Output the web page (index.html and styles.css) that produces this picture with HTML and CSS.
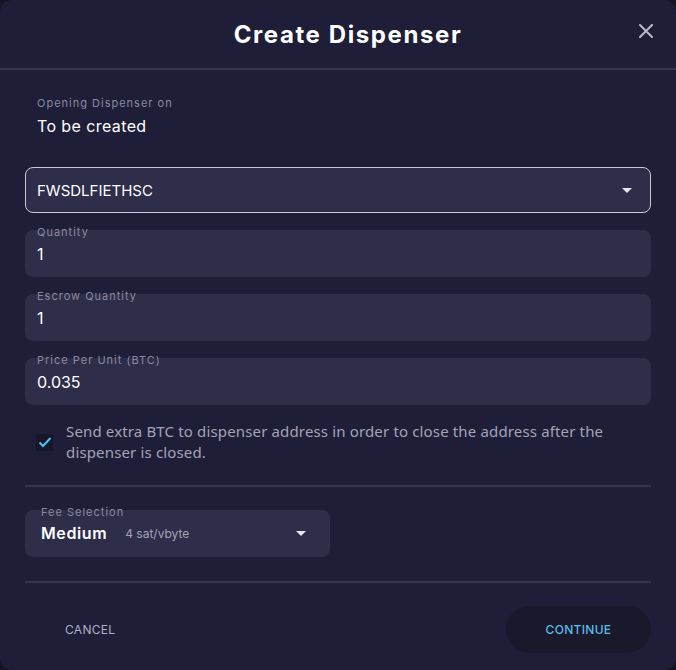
FILE: index.html
```html
<!DOCTYPE html>
<html lang="en">
<head>
    <meta charset="UTF-8">
    <meta name="viewport" content="width=device-width, initial-scale=1.0">
    <title>Create Dispenser</title>
    <link rel="stylesheet" href="styles.css">
</head>
<body>
    <div class="dialog">
        <div class="header">
            <span></span>
            <h2>Create Dispenser</h2>
            <button class="close" aria-label="Close">
                <svg width="14" height="14" viewBox="0 0 14 14"><path d="M1 1L13 13M13 1L1 13" stroke="#b9b8c9" stroke-width="2" stroke-linecap="round"/></svg>
            </button>
        </div>

        <div class="body">
            <div class="opening">
                <div class="opening-label">Opening Dispenser on</div>
                <div class="opening-value">To be created</div>
            </div>

            <div class="select">
                <span>FWSDLFIETHSC</span>
                <span class="arrow"></span>
            </div>

            <div class="field">
                <div class="field-label">Quantity</div>
                <div class="field-value">1</div>
            </div>
            <div class="field">
                <div class="field-label">Escrow Quantity</div>
                <div class="field-value">1</div>
            </div>
            <div class="field">
                <div class="field-label">Price Per Unit (BTC)</div>
                <div class="field-value">0.035</div>
            </div>

            <label class="check-row">
                <span class="checkbox">
                    <svg width="14" height="12" viewBox="0 0 14 12"><path d="M1.5 6.5L5 10L12.5 2" fill="none" stroke="#4fc0f2" stroke-width="2"/></svg>
                </span>
                <span class="check-text">Send extra BTC to dispenser address in order to close the address after the dispenser is closed.</span>
            </label>

            <div class="divider first"></div>

            <div class="fee">
                <div class="field-label">Fee Selection</div>
                <div class="fee-row">
                    <span class="fee-name">Medium</span>
                    <span class="fee-rate">4 sat/vbyte</span>
                    <span class="arrow"></span>
                </div>
            </div>

            <div class="divider"></div>

            <div class="footer">
                <button class="cancel">CANCEL</button>
                <button class="continue">CONTINUE</button>
            </div>
        </div>
    </div>
</body>
</html>
```

FILE: styles.css
```css
body {
    margin: 0;
    padding: 0;
    background-color: #141422;
    font-family: Inter, "Noto Sans", sans-serif;
    color: #fff;
}
.dialog {
    width: 676px;
    height: 670px;
    background: #1e1e38;
    border-radius: 12px;
    box-sizing: border-box;
    display: flow-root;
}
.header {
    height: 70px;
    display: grid;
    grid-template-columns: 1fr auto 1fr;
    align-items: center;
    border-bottom: 2px solid #35344c;
    box-sizing: border-box;
}
.header h2 {
    margin: 0 0 0 20px;
    font-size: 24px;
    font-weight: 700;
    letter-spacing: 1.6px;
}
.close {
    justify-self: end;
    margin-right: 23px;
    margin-top: -6px;
    background: none;
    border: none;
    padding: 0;
    width: 14px;
    height: 14px;
    cursor: pointer;
}
.close svg {
    display: block;
}
.body {
    padding: 0 25px;
    display: flow-root;
}
.opening {
    padding: 26px 12px 0;
}
.opening-label {
    font-size: 11px;
    line-height: 14px;
    color: #8a899f;
    letter-spacing: 1px;
}
.opening-value {
    font-size: 16px;
    line-height: 20px;
    margin-top: 6px;
    letter-spacing: 0.4px;
}
.select {
    margin-top: 31px;
    height: 46px;
    box-sizing: border-box;
    border: 1px solid #c9c8d4;
    border-radius: 8px;
    background: #2e2d4a;
    display: flex;
    align-items: center;
    justify-content: space-between;
    padding: 0 18px 0 11px;
    font-size: 15px;
}
.arrow {
    width: 0;
    height: 0;
    border-left: 5px solid transparent;
    border-right: 5px solid transparent;
    border-top: 5px solid #e6e6ee;
}
.field {
    margin-top: 17px;
    height: 47px;
    box-sizing: border-box;
    background: #2e2d4a;
    border-radius: 8px;
    padding: 0 12px;
    display: flex;
    flex-direction: column;
}
.field-label {
    font-size: 11px;
    line-height: 14px;
    margin-top: -5px;
    color: #8a899f;
    letter-spacing: 1px;
}
.field-value {
    font-size: 16px;
    line-height: 20px;
    margin-top: 5px;
}
.check-row {
    display: flex;
    align-items: center;
    gap: 13px;
    margin-top: 16px;
    padding-left: 11px;
}
.checkbox {
    flex: none;
    width: 17px;
    height: 17px;
    border-radius: 2px;
    background: #17172a;
    display: flex;
    align-items: center;
    justify-content: center;
}
.check-text {
    font-family: "Noto Sans", sans-serif;
    font-size: 15px;
    line-height: 21px;
    letter-spacing: 0.15px;
    color: #a4a3b6;
}
.divider {
    height: 2px;
    background: #35344c;
    margin-top: 24px;
}
.divider.first {
    margin-top: 22px;
}
.fee {
    margin-top: 23px;
    width: 305px;
    height: 47px;
    box-sizing: border-box;
    background: #2e2d4a;
    border-radius: 8px;
    padding: 0 24px 0 16px;
    display: flex;
    flex-direction: column;
}
.fee-row {
    display: flex;
    align-items: center;
    margin-top: 3px;
}
.fee-name {
    font-size: 16px;
    font-weight: 600;
    line-height: 22px;
    letter-spacing: 0.6px;
}
.fee-rate {
    font-size: 12px;
    color: #a4a3b6;
    margin-left: 18px;
    flex: 1;
}
.footer {
    display: flex;
    justify-content: space-between;
    align-items: center;
    margin-top: 23px;
}
.cancel {
    background: none;
    border: none;
    font-family: inherit;
    font-size: 12px;
    letter-spacing: 0.3px;
    color: #b1b0c2;
    padding: 0 0 0 40px;
    cursor: pointer;
}
.continue {
    width: 145px;
    height: 47px;
    border: none;
    border-radius: 24px;
    background: #19192b;
    color: #5bbcec;
    font-family: inherit;
    font-size: 12px;
    font-weight: 500;
    letter-spacing: 0.3px;
    cursor: pointer;
}
```
